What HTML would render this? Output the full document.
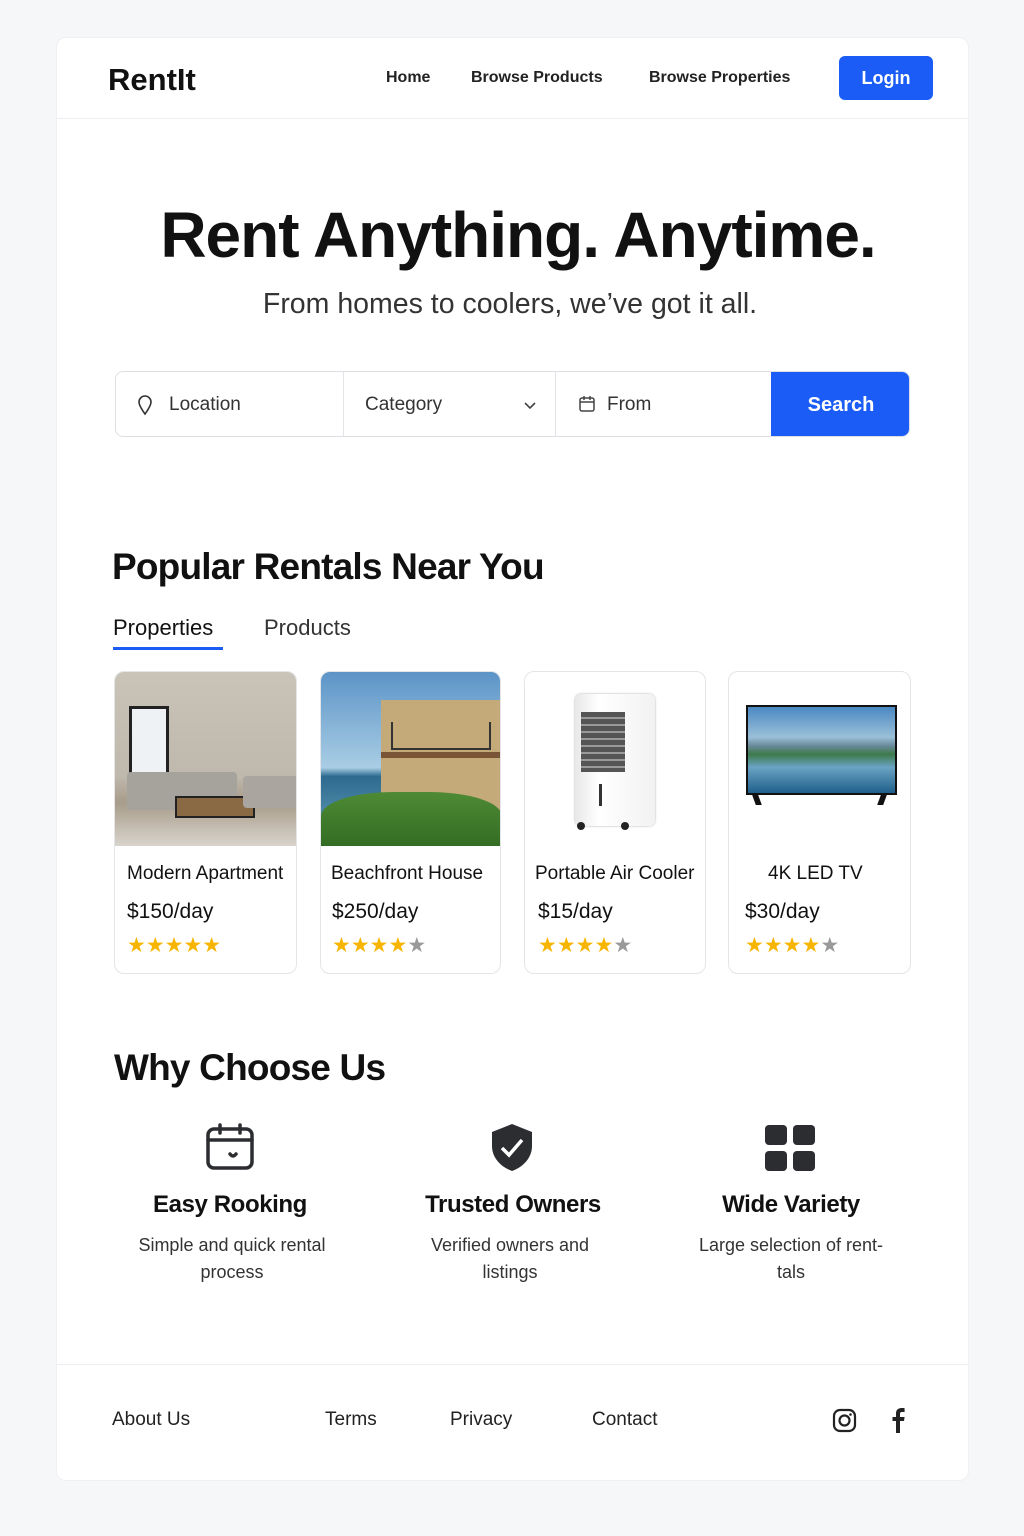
<!DOCTYPE html>
<html><head><meta charset="utf-8"><style>
*{margin:0;padding:0;box-sizing:border-box}
body{width:1024px;height:1536px;background:#f6f7f9;font-family:"Liberation Sans",sans-serif;color:#111;position:relative;overflow:hidden}
.card{position:absolute;left:56px;top:37px;width:913px;height:1444px;background:#fff;border-radius:10px;border:1px solid #eef0f3}
.abs{position:absolute;white-space:nowrap}
.nav{font-size:16px;font-weight:bold;color:#222;top:69px}
.pc{position:absolute;top:671px;height:303px;border:1px solid #e3e5e8;border-radius:10px;overflow:hidden;background:#fff}
.pc .img{height:174px;position:relative;overflow:hidden}
.pc .t{position:absolute;top:191px;font-size:19px;color:#111}
.pc .p{position:absolute;top:228px;font-size:21px;color:#111}
.pc .s{position:absolute;top:261px;font-size:21px;letter-spacing:0px;color:#f7b500}
.g{color:#999}
.ft{font-size:19px;color:#222;top:1409px}
.wt{font-size:24px;font-weight:bold;text-align:center;width:300px;top:1191px;letter-spacing:-0.4px}
.wd{font-size:18px;color:#333;text-align:center;width:240px;top:1232px;line-height:27px;white-space:normal}
</style></head><body>
<div class="card"></div>
<div class="abs" style="left:108px;top:62px;font-size:31px;font-weight:bold">RentIt</div>
<div class="abs nav" style="left:386px">Home</div>
<div class="abs nav" style="left:471px">Browse Products</div>
<div class="abs nav" style="left:649px">Browse Properties</div>
<div class="abs" style="left:839px;top:56px;width:94px;height:44px;background:#1a5cf5;border-radius:6px;color:#fff;font-size:18px;font-weight:bold;text-align:center;line-height:44px">Login</div>
<div class="abs" style="left:57px;top:118px;width:911px;height:1px;background:#eceef1"></div>

<div class="abs" style="left:0;width:1036px;text-align:center;top:198px;font-size:64px;font-weight:bold;letter-spacing:-1px">Rent Anything. Anytime.</div>
<div class="abs" style="left:0;width:1020px;text-align:center;top:288px;font-size:28.5px;color:#333">From homes to coolers, we’ve got it all.</div>

<div class="abs" style="left:115px;top:371px;width:795px;height:66px;border:1px solid #dcdfe3;border-radius:8px;overflow:hidden">
 <div class="abs" style="left:227px;top:0;width:1px;height:66px;background:#e3e5e8"></div>
 <div class="abs" style="left:439px;top:0;width:1px;height:66px;background:#e3e5e8"></div>
 <svg class="abs" style="left:20px;top:22px" width="18" height="22" viewBox="0 0 18 22"><path d="M9 20C4 13 3 10 3 8a6 6 0 0 1 12 0c0 2-1 5-6 12z" fill="none" stroke="#333" stroke-width="1.6"/></svg>
 <div class="abs" style="left:53px;top:22px;font-size:19px;color:#333">Location</div>
 <div class="abs" style="left:249px;top:22px;font-size:19px;color:#333">Category</div>
 <svg class="abs" style="left:407px;top:28px" width="14" height="10"><path d="M2 3l5 5 5-5" fill="none" stroke="#444" stroke-width="1.6"/></svg>
 <svg class="abs" style="left:462px;top:23px" width="18" height="18" viewBox="0 0 18 18"><rect x="2" y="3" width="14" height="13" rx="2" fill="none" stroke="#444" stroke-width="1.5"/><path d="M2 7h14M6 1v4M12 1v4" stroke="#444" stroke-width="1.5"/></svg>
 <div class="abs" style="left:491px;top:22px;font-size:19px;color:#333">From</div>
 <div class="abs" style="left:655px;top:0;width:140px;height:66px;background:#1a5cf5;color:#fff;font-size:20px;font-weight:bold;text-align:center;line-height:66px">Search</div>
</div>

<div class="abs" style="left:112px;top:546px;font-size:37px;font-weight:bold;letter-spacing:-0.8px">Popular Rentals Near You</div>
<div class="abs" style="left:113px;top:615px;font-size:22px">Properties</div>
<div class="abs" style="left:264px;top:615px;font-size:22px;color:#333">Products</div>
<div class="abs" style="left:113px;top:647px;width:110px;height:3px;background:#1a5cf5"></div>

<div class="pc" style="left:114px;width:183px">
 <div class="img" style="background:linear-gradient(#c9c3b8,#bfb8ad 60%,#a89c8a 75%,#d8d4cc)">
  <div class="abs" style="left:14px;top:34px;width:40px;height:80px;background:#eef2f4;border:3px solid #222"></div>
  <div class="abs" style="left:12px;top:100px;width:110px;height:38px;background:#a6a39d;border-radius:4px"></div>
  <div class="abs" style="left:60px;top:124px;width:80px;height:22px;background:#8a6a45;border:2px solid #222"></div>
  <div class="abs" style="left:128px;top:104px;width:55px;height:32px;background:#aaa59e;border-radius:4px"></div>
 </div>
 <div class="t" style="left:12px">Modern Apartment</div><div class="p" style="left:12px">$150/day</div><div class="s" style="left:12px">★★★★★</div>
</div>
<div class="pc" style="left:320px;width:181px">
 <div class="img" style="background:linear-gradient(#5c94c7,#a9cde4 55%,#2d6a8f 60%,#4c87a5 80%)">
  <div class="abs" style="left:60px;top:28px;width:121px;height:120px;background:#c4a979"></div>
  <div class="abs" style="left:70px;top:50px;width:100px;height:28px;border:2px solid #333;border-top:none"></div>
  <div class="abs" style="left:60px;top:80px;width:121px;height:6px;background:#7a5535"></div>
  <div class="abs" style="left:0;top:120px;width:181px;height:60px;background:linear-gradient(#4f8a35,#2f6a22);border-radius:40% 40% 0 0"></div>
 </div>
 <div class="t" style="left:10px">Beachfront House</div><div class="p" style="left:11px">$250/day</div><div class="s" style="left:11px">★★★★<span class="g">★</span></div>
</div>
<div class="pc" style="left:524px;width:182px">
 <div class="img">
  <div class="abs" style="left:50px;top:22px;width:80px;height:132px;background:linear-gradient(90deg,#e8e8e8,#fff 30%,#f2f2f2);border-radius:6px;box-shadow:0 0 2px #aaa"></div>
  <div class="abs" style="left:56px;top:40px;width:44px;height:60px;background:repeating-linear-gradient(#555 0 5px,#999 5px 7px)"></div>
  <div class="abs" style="left:74px;top:112px;width:3px;height:22px;background:#333"></div>
  <div class="abs" style="left:52px;top:150px;width:8px;height:8px;background:#222;border-radius:50%"></div>
  <div class="abs" style="left:96px;top:150px;width:8px;height:8px;background:#222;border-radius:50%"></div>
 </div>
 <div class="t" style="left:10px">Portable Air Cooler</div><div class="p" style="left:13px">$15/day</div><div class="s" style="left:13px">★★★★<span class="g">★</span></div>
</div>
<div class="pc" style="left:728px;width:183px">
 <div class="img">
  <div class="abs" style="left:17px;top:33px;width:151px;height:90px;background:linear-gradient(#4a88c2,#9bc0d8 35%,#6a8a9a 45%,#3d7a4a 55%,#6aa3c4 70%,#1f5f8a);border:2px solid #111"></div>
  <div class="abs" style="left:25px;top:123px;width:6px;height:10px;background:#111;transform:skew(20deg)"></div>
  <div class="abs" style="left:150px;top:123px;width:6px;height:10px;background:#111;transform:skew(-20deg)"></div>
 </div>
 <div class="t" style="left:39px">4K LED TV</div><div class="p" style="left:16px">$30/day</div><div class="s" style="left:16px">★★★★<span class="g">★</span></div>
</div>

<div class="abs" style="left:114px;top:1047px;font-size:37px;font-weight:bold;letter-spacing:-0.8px">Why Choose Us</div>
<svg class="abs" style="left:205px;top:1123px" width="50" height="48" viewBox="0 0 50 48"><rect x="3" y="6" width="44" height="39" rx="6" fill="none" stroke="#2b2d30" stroke-width="3.5"/><path d="M3 17h44M15 2v8M35 2v8M25 31q3 4 6 0" fill="none" stroke="#2b2d30" stroke-width="3.5" stroke-linecap="round"/></svg>
<svg class="abs" style="left:490px;top:1122px" width="44" height="50" viewBox="0 0 44 50"><path d="M22 2L42 10v14c0 12-9 21-20 25C11 45 2 36 2 24V10z" fill="#2b2d30"/><path d="M12 26l7 7 13-15" fill="none" stroke="#fff" stroke-width="3.5"/></svg>
<svg class="abs" style="left:765px;top:1125px" width="50" height="46"><rect x="0" y="0" width="22" height="20" rx="4" fill="#2b2d30"/><rect x="28" y="0" width="22" height="20" rx="4" fill="#2b2d30"/><rect x="0" y="26" width="22" height="20" rx="4" fill="#2b2d30"/><rect x="28" y="26" width="22" height="20" rx="4" fill="#2b2d30"/></svg>
<div class="abs wt" style="left:80px">Easy Rooking</div>
<div class="abs wt" style="left:363px">Trusted Owners</div>
<div class="abs wt" style="left:641px">Wide Variety</div>
<div class="abs wd" style="left:112px">Simple and quick rental process</div>
<div class="abs wd" style="left:410px;width:200px">Verified owners and listings</div>
<div class="abs wd" style="left:681px;width:220px">Large selection of rent-<br>tals</div>

<div class="abs" style="left:57px;top:1364px;width:911px;height:1px;background:#eceef1"></div>
<div class="abs ft" style="left:112px">About Us</div>
<div class="abs ft" style="left:325px">Terms</div>
<div class="abs ft" style="left:450px">Privacy</div>
<div class="abs ft" style="left:592px">Contact</div>
<svg class="abs" style="left:832px;top:1408px" width="25" height="25" viewBox="0 0 25 25"><rect x="2" y="2" width="21" height="21" rx="6" fill="none" stroke="#222" stroke-width="2.2"/><circle cx="12.5" cy="12.5" r="5" fill="none" stroke="#222" stroke-width="2.2"/><circle cx="18.5" cy="6.5" r="1.3" fill="#222"/></svg>
<svg class="abs" style="left:890px;top:1407px" width="16" height="26" viewBox="0 0 16 26"><path d="M10 26V14h4l.6-4H10V7c0-1.2.4-2 2-2h2.6V1.2C14 1.1 12.8 1 11.5 1 8.5 1 6 2.8 6 6.2V10H2.5v4H6v12z" fill="#222"/></svg>
</body></html>
